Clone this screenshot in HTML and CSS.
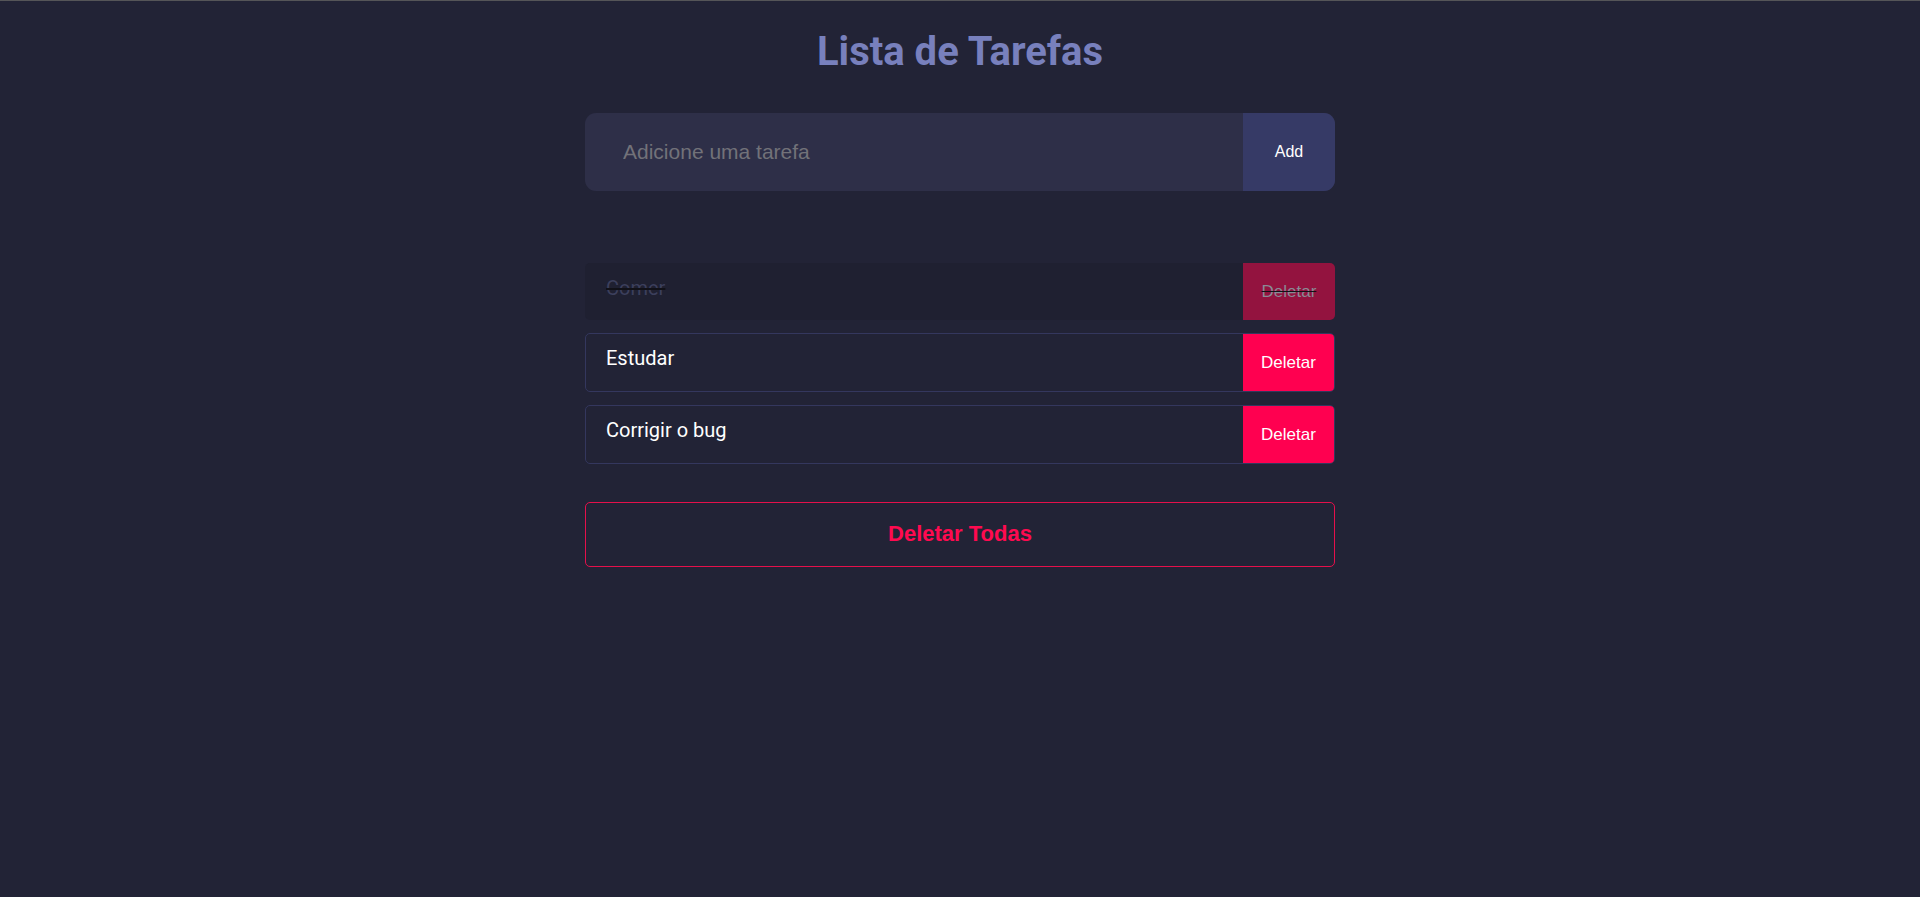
FILE: index.html
```html
<!DOCTYPE html>
<html lang="pt-BR">
<head>
<meta charset="utf-8">
<title>Lista de Tarefas</title>
<link rel="stylesheet" href="styles.css">
</head>
<body>
<main class="app">
  <h1 class="title">Lista de Tarefas</h1>
  <form class="add-form">
    <input class="add-input" type="text" placeholder="Adicione uma tarefa">
    <button class="add-btn" type="button">Add</button>
  </form>
  <ul class="tasks">
    <li class="task task--done">
      <span class="task-text">Comer</span>
      <button class="task-del" type="button">Deletar</button>
    </li>
    <li class="task">
      <span class="task-text">Estudar</span>
      <button class="task-del" type="button">Deletar</button>
    </li>
    <li class="task">
      <span class="task-text">Corrigir o bug</span>
      <button class="task-del" type="button">Deletar</button>
    </li>
  </ul>
  <button class="delete-all" type="button">Deletar Todas</button>
</main>
</body>
</html>
```
FILE: styles.css
```css
html, body {
  margin: 0;
  padding: 0;
}
body {
  background: #222336;
  border-top: 1px solid #555558;
  min-height: 896px;
  font-family: "Liberation Sans", Arial, sans-serif;
}
.app {
  width: 750px;
  margin: 0 auto;
  display: flex;
  flex-direction: column;
}
.title {
  margin: 27px 0 0;
  text-align: center;
  font-family: Roboto, "Liberation Sans", sans-serif;
  font-weight: 700;
  font-size: 40px;
  line-height: 47px;
  color: #7880bd;
}
.add-form {
  margin-top: 38px;
  display: flex;
  height: 78px;
  border-radius: 11px;
  overflow: hidden;
  background: #2e2f48;
}
.add-input {
  flex: 1;
  border: none;
  outline: none;
  background: transparent;
  padding: 0 0 0 38px;
  font-family: "Liberation Sans", Arial, sans-serif;
  font-size: 21px;
  color: #fff;
}
.add-input::placeholder {
  color: #727279;
}
.add-btn {
  width: 92px;
  border: none;
  background: #363a66;
  color: #fff;
  font-family: "Liberation Sans", Arial, sans-serif;
  font-size: 16px;
  padding: 0;
}
.tasks {
  list-style: none;
  margin: 72px 0 0;
  padding: 0;
  display: flex;
  flex-direction: column;
  gap: 12.6px;
}
.task {
  display: flex;
  height: 57.4px;
  border: 1px solid #34375e;
  border-radius: 5px;
  overflow: hidden;
  background: #222336;
}
.task-text {
  flex: 1;
  padding: 13px 0 0 20px;
  font-family: Roboto, "Liberation Sans", sans-serif;
  font-size: 20px;
  line-height: 23px;
  color: #fff;
}
.task-del {
  width: 91px;
  border: none;
  padding: 0;
  background: #ff0050;
  color: #fff;
  font-family: "Liberation Sans", Arial, sans-serif;
  font-size: 17px;
}
.task--done {
  border: none;
  background: #1f2031;
}
.task--done .task-text {
  padding-top: 14px;
  padding-left: 21px;
  color: #3c3f5c;
  text-decoration: line-through;
  text-decoration-color: #111118;
}
.task--done .task-del {
  width: 92px;
  background: #93133f;
  color: #8a8a95;
  text-decoration: line-through;
  text-decoration-color: #111118;
}
.delete-all {
  margin-top: 37.6px;
  height: 65px;
  border: 1px solid #e5104b;
  border-radius: 5px;
  background: transparent;
  color: #ff0a50;
  font-family: "Liberation Sans", Arial, sans-serif;
  font-weight: 700;
  font-size: 22px;
}
```
